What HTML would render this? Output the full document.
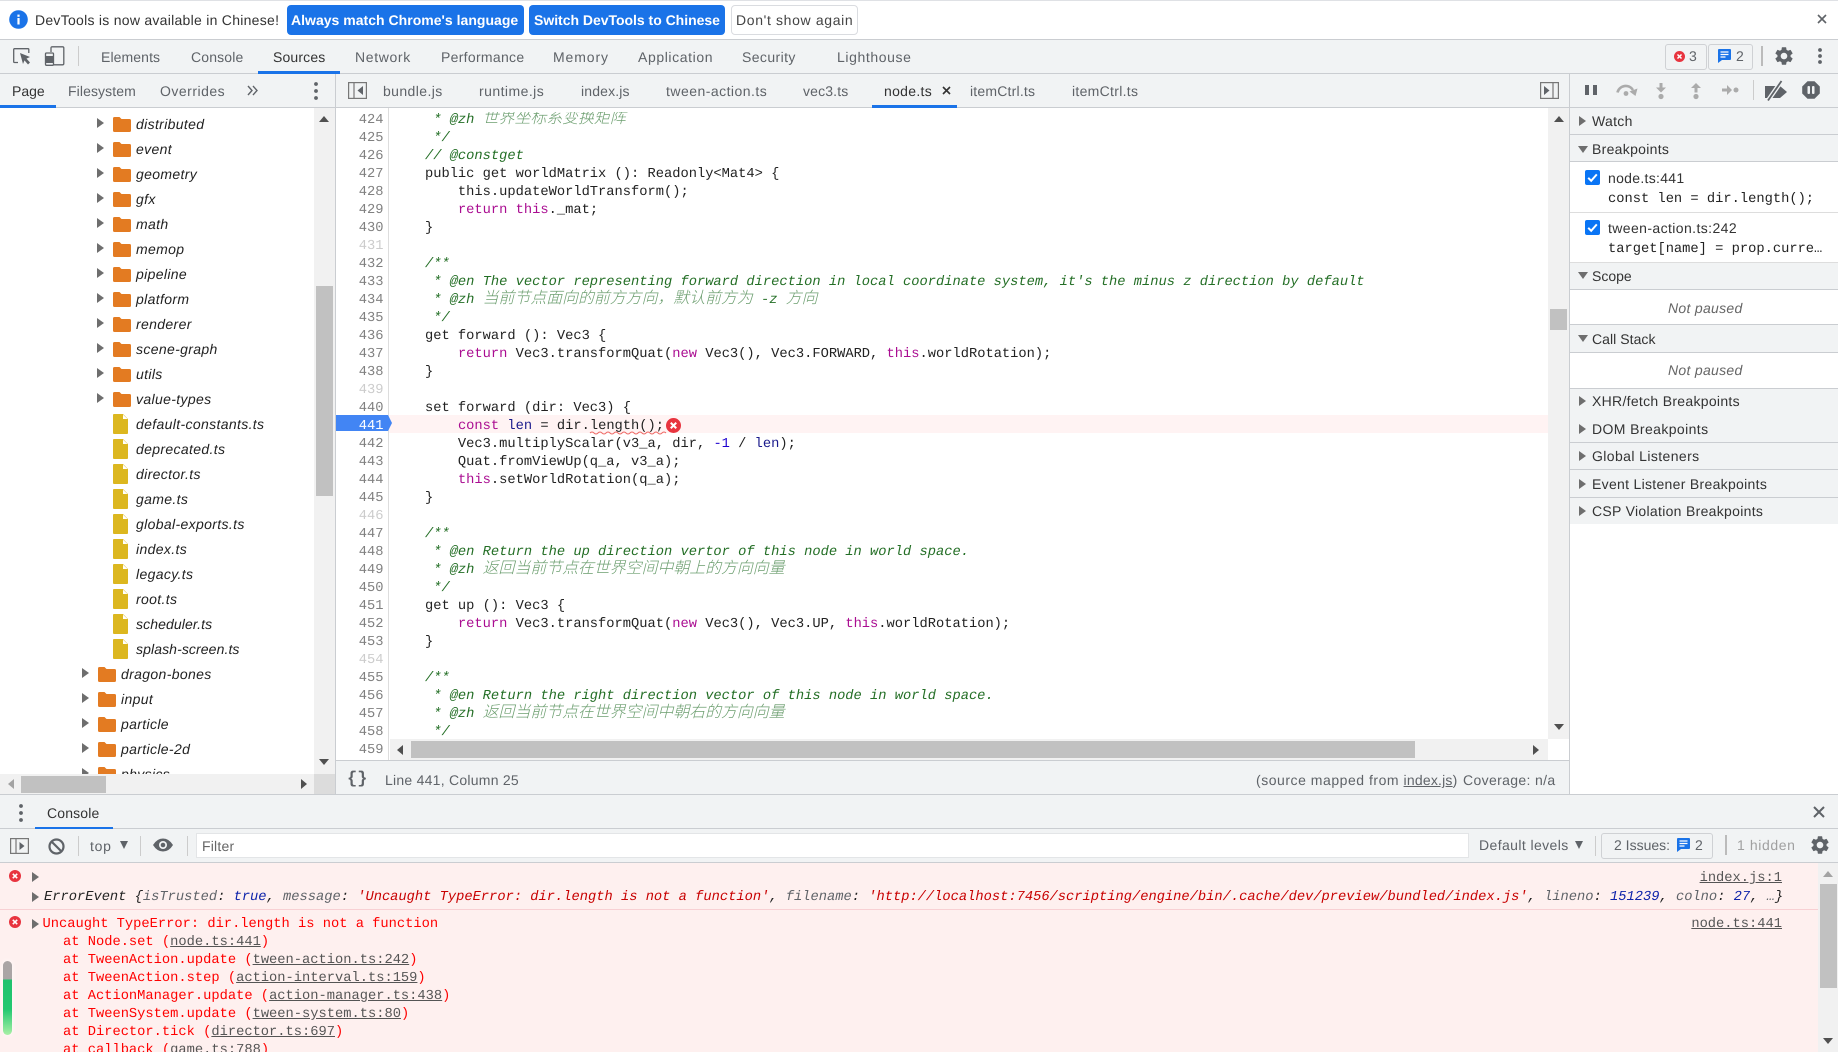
<!DOCTYPE html>
<html><head><meta charset="utf-8"><title>DevTools</title>
<style>
html,body{margin:0;padding:0;width:1839px;height:1052px;overflow:hidden;background:#fff}
body{position:relative;font:14px/18px "Liberation Sans","Noto Sans CJK SC",sans-serif;color:#333;text-rendering:geometricPrecision}
.t{position:absolute;white-space:pre;line-height:18px;letter-spacing:.3px}
.b{position:absolute}
.g{color:#5f6368}
.m{font-family:"Liberation Mono","Noto Sans CJK SC",monospace;font-size:13.74px}
.t.m{letter-spacing:0;margin-top:2px}
svg{position:absolute;overflow:visible}
.hb{background:#cacdd1;height:1px;position:absolute}
.sep{position:absolute;width:1px;background:#ccc}
.ar{position:absolute;width:0;height:0;border-left:7px solid #6e6e6e;border-top:5px solid transparent;border-bottom:5px solid transparent}
.ad{position:absolute;width:0;height:0;border-top:7px solid #6e6e6e;border-left:5px solid transparent;border-right:5px solid transparent}
.tree{position:absolute;left:0;top:112px;width:314px;height:662px;overflow:hidden}
.tree div{position:relative;height:25px;line-height:25px;font-style:italic;white-space:pre;color:#222;letter-spacing:.35px}
.tree svg{top:5px}
.tree .a{padding-left:136px}.tree .a svg{left:113px}.tree .a i{left:97px}
.tree .f{padding-left:136px}.tree .f svg{left:113px;top:2px}
.tree .c{padding-left:121px}.tree .c svg{left:98px}.tree .c i{left:82px}
.tree i{position:absolute;top:6px;width:0;height:0;border-left:7px solid #6e6e6e;border-top:5px solid transparent;border-bottom:5px solid transparent}
.ln{position:absolute;left:336px;top:112px;width:47.5px;height:648px;overflow:hidden;text-align:right;color:#808080;font-family:"Liberation Mono",monospace;font-size:13.74px}
.ln div{height:18px;line-height:18px}
.ln .e{color:#ccc}.ln .w{color:#fff}
.code{position:absolute;left:392px;top:112px;width:1156px;height:627px;overflow:hidden;color:#222;font-family:"Liberation Mono","Noto Sans CJK SC",monospace;font-size:13.74px}
.code div{height:18px;line-height:18px;white-space:pre}
.k{color:#aa0d91}.c{color:#236e25;font-style:italic}.z{font-family:"Noto Sans CJK SC",sans-serif;font-size:15.9px;line-height:0;color:#6d9f70;font-style:italic;font-weight:300}.n{color:#1c00cf}.v{color:#1a1a8c}
.sec{position:absolute;left:1570px;width:268px;background:#f1f3f4;border-bottom:1px solid #cacdd1}
.sect{position:absolute;left:1592px;white-space:pre;line-height:18px;color:#333;letter-spacing:.3px}
.lk{color:#555;text-decoration:underline}
.r{color:#f00}
.i{font-style:italic}
</style></head><body>
<svg width="0" height="0" style="position:absolute"><defs>
<symbol id="fo" viewBox="0 0 18 15"><path d="M0 1.5Q0 0 1.5 0H6.5L8.5 2H16.5Q18 2 18 3.5V13.5Q18 15 16.5 15H1.5Q0 15 0 13.5Z" fill="#e37b22"/></symbol>
<symbol id="fi" viewBox="0 0 15 20"><path d="M1 0H10L15 5V19Q15 20 14 20H1Q0 20 0 19V1Q0 0 1 0Z" fill="#dcb720"/><path d="M10 0.6L14.6 5H10Z" fill="#fff"/></symbol>
<symbol id="gear" viewBox="0 0 24 24"><path fill="#5f6368" d="M19.14 12.94c.04-.3.06-.61.06-.94 0-.32-.02-.64-.07-.94l2.03-1.58a.49.49 0 0 0 .12-.61l-1.92-3.32a.488.488 0 0 0-.59-.22l-2.39.96c-.5-.38-1.03-.7-1.62-.94l-.36-2.54a.484.484 0 0 0-.48-.41h-3.84c-.24 0-.43.17-.47.41l-.36 2.54c-.59.24-1.13.57-1.62.94l-2.39-.96c-.22-.08-.47 0-.59.22L2.74 8.87c-.12.21-.08.47.12.61l2.03 1.58c-.05.3-.09.63-.09.94s.02.64.07.94l-2.03 1.58a.49.49 0 0 0-.12.61l1.92 3.32c.12.22.37.29.59.22l2.39-.96c.5.38 1.03.7 1.62.94l.36 2.54c.05.24.24.41.48.41h3.84c.24 0 .44-.17.47-.41l.36-2.54c.59-.24 1.13-.56 1.62-.94l2.39.96c.22.08.47 0 .59-.22l1.92-3.32c.12-.22.07-.47-.12-.61l-2.01-1.58zM12 15.6c-1.98 0-3.6-1.62-3.6-3.6s1.62-3.6 3.6-3.6 3.6 1.62 3.6 3.6-1.62 3.6-3.6 3.6z"/></symbol>
<symbol id="msg" viewBox="0 0 13 14"><path d="M1 0H12Q13 0 13 1V10Q13 11 12 11H4L0 14V1Q0 0 1 0Z" fill="#1a73e8"/><path d="M2.5 3H10.5M2.5 5.5H10.5M2.5 8H7.5" stroke="#fff" stroke-width="1.3"/></symbol>
<symbol id="err" viewBox="0 0 12 12"><circle cx="6" cy="6" r="6" fill="#e8343f"/><path d="M3.8 3.8L8.2 8.2M8.2 3.8L3.8 8.2" stroke="#fff" stroke-width="1.6"/></symbol>
</defs></svg>

<!-- infobar -->
<div class="b" style="left:0;top:0;width:1839px;height:1px;background:#dfe1e5"></div>
<svg style="left:9px;top:10px" width="19" height="19" viewBox="0 0 19 19"><circle cx="9.5" cy="9.5" r="9.3" fill="#1a73e8"/><rect x="8.4" y="8" width="2.2" height="6.5" fill="#fff"/><rect x="8.4" y="4.6" width="2.2" height="2.2" fill="#fff"/></svg>
<span class="t" style="left:35px;top:11px;color:#333;letter-spacing:.27px">DevTools is now available in Chinese!</span>
<div class="b" style="left:287px;top:5px;width:237px;height:30px;background:#1a73e8;border-radius:4px"></div>
<span class="t" style="left:291px;top:11px;color:#fff;font-weight:bold;letter-spacing:.02px">Always match Chrome's language</span>
<div class="b" style="left:529px;top:5px;width:196px;height:30px;background:#1a73e8;border-radius:4px"></div>
<span class="t" style="left:534px;top:11px;color:#fff;font-weight:bold;letter-spacing:-.02px">Switch DevTools to Chinese</span>
<div class="b" style="left:731px;top:5px;width:125px;height:28px;border:1px solid #dadce0;border-radius:4px"></div>
<span class="t" style="left:736px;top:11px;color:#444;letter-spacing:.65px">Don't show again</span>
<svg style="left:1817px;top:14px" width="10" height="10"><path d="M1 1L9 9M9 1L1 9" stroke="#5f6368" stroke-width="1.6"/></svg>

<!-- main toolbar -->
<div class="b" style="left:0;top:39px;width:1839px;height:35px;background:#f1f3f4"></div>
<div class="hb" style="left:0;top:39px;width:1839px"></div>
<div class="hb" style="left:0;top:73px;width:1839px"></div>
<svg style="left:13px;top:48px" width="18" height="17" viewBox="0 0 18 17"><path d="M5 14.5H1.5Q.7 14.5.7 13.7V1.5Q.7.7 1.5.7H15Q15.8.7 15.8 1.5V5" fill="none" stroke="#5f6368" stroke-width="1.3"/><path d="M7 5L17 9L13.5 10.6L17 14.5L15 16.5L11.5 12.4L10 16Z" fill="#5f6368"/></svg>
<svg style="left:45px;top:46px" width="20" height="20" viewBox="0 0 20 20"><path d="M6 6V2Q6 .8 7.2 .8H17.5Q18.8.8 18.8 2V17.5Q18.8 18.8 17.5 18.8H8" fill="none" stroke="#5f6368" stroke-width="1.3"/><path d="M1.5 7H7.5Q8.5 7 8.5 8V18Q8.5 19.3 7.5 19.3H1.5Q.5 19.3.5 18V8Q.5 7 1.5 7Z" fill="none" stroke="#5f6368" stroke-width="1.3"/><rect x="1" y="10" width="7" height="7" fill="#5f6368"/></svg>
<div class="sep" style="left:78px;top:46px;height:20px"></div>
<span class="t g" style="left:101px;top:48px;letter-spacing:.1px">Elements</span>
<span class="t g" style="left:191px;top:48px;letter-spacing:.15px">Console</span>
<span class="t" style="left:273px;top:48px;color:#333;letter-spacing:.15px">Sources</span>
<span class="t g" style="left:355px;top:48px;letter-spacing:.65px">Network</span>
<span class="t g" style="left:441px;top:48px">Performance</span>
<span class="t g" style="left:553px;top:48px;letter-spacing:.9px">Memory</span>
<span class="t g" style="left:638px;top:48px;letter-spacing:.6px">Application</span>
<span class="t g" style="left:742px;top:48px;letter-spacing:.4px">Security</span>
<span class="t g" style="left:837px;top:48px;letter-spacing:.6px">Lighthouse</span>
<div class="b" style="left:258px;top:71px;width:82px;height:2.5px;background:#1a73e8"></div>
<div class="b" style="left:1665px;top:44px;width:40px;height:24px;border:1px solid #cfd1d4;border-radius:3px"></div>
<svg style="left:1674px;top:50.5px" width="11" height="11"><use href="#err"/></svg>
<span class="t g" style="left:1689px;top:47px">3</span>
<div class="b" style="left:1708px;top:44px;width:43px;height:24px;border:1px solid #cfd1d4;border-radius:3px"></div>
<svg style="left:1718px;top:49px" width="13" height="14"><use href="#msg"/></svg>
<span class="t g" style="left:1736px;top:47px">2</span>
<div class="sep" style="left:1761px;top:46px;height:20px;width:1.5px;background:#bbb"></div>
<svg style="left:1773px;top:45px" width="22" height="22"><use href="#gear"/></svg>
<svg style="left:1817px;top:47px" width="6" height="18"><circle cx="3" cy="3" r="1.9" fill="#5f6368"/><circle cx="3" cy="9" r="1.9" fill="#5f6368"/><circle cx="3" cy="15" r="1.9" fill="#5f6368"/></svg>

<!-- second row -->
<div class="b" style="left:0;top:74px;width:1570px;height:33px;background:#f1f3f4"></div>
<div class="b" style="left:1570px;top:74px;width:268px;height:33px;background:#f1f3f4"></div>
<div class="hb" style="left:0;top:107px;width:1838px"></div>
<span class="t" style="left:12px;top:82px;color:#333;letter-spacing:0">Page</span>
<div class="b" style="left:0;top:105px;width:56px;height:2.5px;background:#1a73e8"></div>
<span class="t g" style="left:68px;top:82px;letter-spacing:.1px">Filesystem</span>
<span class="t g" style="left:160px;top:82px;letter-spacing:.5px">Overrides</span>
<svg style="left:247px;top:85px" width="12" height="11"><path d="M1 1L5 5.5L1 10M6 1L10 5.5L6 10" fill="none" stroke="#5f6368" stroke-width="1.4"/></svg>
<svg style="left:313px;top:81px" width="6" height="20"><circle cx="3" cy="3" r="1.9" fill="#5f6368"/><circle cx="3" cy="10" r="1.9" fill="#5f6368"/><circle cx="3" cy="17" r="1.9" fill="#5f6368"/></svg>
<div class="b" style="left:335px;top:74px;width:1px;height:720px;background:#cacdd1"></div>
<svg style="left:348px;top:82px" width="19" height="17" viewBox="0 0 19 17"><rect x=".6" y=".6" width="17.8" height="15.8" fill="none" stroke="#777" stroke-width="1.2"/><path d="M6 .6V16.4" stroke="#777" stroke-width="1.2"/><path d="M15 4V13L9.5 8.5Z" fill="#5f6368"/></svg>
<span class="t g" style="left:383px;top:82px;letter-spacing:.4px">bundle.js</span>
<span class="t g" style="left:479px;top:82px;letter-spacing:.45px">runtime.js</span>
<span class="t g" style="left:581px;top:82px;letter-spacing:.15px">index.js</span>
<span class="t g" style="left:666px;top:82px;letter-spacing:.47px">tween-action.ts</span>
<span class="t g" style="left:803px;top:82px;letter-spacing:.15px">vec3.ts</span>
<span class="t" style="left:884px;top:82px;color:#333">node.ts</span>
<svg style="left:942px;top:86px" width="9" height="9"><path d="M1 1L8 8M8 1L1 8" stroke="#333" stroke-width="1.6"/></svg>
<div class="b" style="left:872px;top:105px;width:85px;height:2.5px;background:#1a73e8"></div>
<span class="t g" style="left:970px;top:82px;letter-spacing:.2px">itemCtrl.ts</span>
<span class="t g" style="left:1072px;top:82px">itemCtrl.ts</span>
<svg style="left:1540px;top:82px" width="19" height="17" viewBox="0 0 19 17"><rect x=".6" y=".6" width="17.8" height="15.8" fill="none" stroke="#777" stroke-width="1.2"/><path d="M13 .6V16.4" stroke="#777" stroke-width="1.2"/><path d="M4 4V13L9.5 8.5Z" fill="#5f6368"/></svg>

<!-- debugger toolbar icons -->
<div class="b" style="left:1569px;top:74px;width:1px;height:720px;background:#cacdd1"></div>
<svg style="left:1585px;top:85px" width="12" height="10"><rect x="0" y="0" width="4" height="10" fill="#5f6368"/><rect x="8" y="0" width="4" height="10" fill="#5f6368"/></svg>
<svg style="left:1615px;top:82px" width="24" height="16" viewBox="0 0 24 16"><path d="M2.5 10.5A8.5 8.5 0 0 1 18 8" fill="none" stroke="#ababab" stroke-width="2.6"/><path d="M14.5 9.5L22.5 6.5L20.5 14Z" fill="#ababab"/><circle cx="11" cy="11.5" r="2.4" fill="#ababab"/></svg>
<svg style="left:1655px;top:82px" width="12" height="18" viewBox="0 0 12 18"><path d="M4.5 1H7.5V5.5H11L6 10.5L1 5.5H4.5Z" fill="#ababab"/><circle cx="6" cy="14.5" r="2.6" fill="#ababab"/></svg>
<svg style="left:1690px;top:82px" width="12" height="18" viewBox="0 0 12 18"><path d="M4.5 10.5H7.5V6H11L6 1L1 6H4.5Z" fill="#ababab"/><circle cx="6" cy="14.5" r="2.6" fill="#ababab"/></svg>
<svg style="left:1721px;top:84px" width="18" height="12" viewBox="0 0 18 12"><path d="M1 4.5H6V1L11 6L6 11V7.5H1Z" fill="#ababab"/><circle cx="15" cy="6" r="2.5" fill="#ababab"/></svg>
<div class="sep" style="left:1753px;top:80px;height:20px"></div>
<svg style="left:1764px;top:80px" width="24" height="21" viewBox="0 0 24 21"><path d="M1 6H16L23 12L16 18H1Z" fill="#5f6368"/><path d="M4 20.5L17.5 1" stroke="#f1f3f4" stroke-width="4.5"/><path d="M4 20.5L17.5 1" stroke="#5f6368" stroke-width="1.8"/></svg>
<svg style="left:1802px;top:81px" width="18" height="18" viewBox="0 0 18 18"><path d="M5.5.2H12.5L17.8 5.5V12.5L12.5 17.8H5.5L.2 12.5V5.5Z" fill="#5f6368"/><rect x="5.5" y="5" width="2.5" height="8" rx="1" fill="#f1f3f4"/><rect x="10" y="5" width="2.5" height="8" rx="1" fill="#f1f3f4"/></svg>

<!-- tree -->
<div class="tree">
<div class="a"><i></i><svg width="18" height="15"><use href="#fo"/></svg>distributed</div>
<div class="a"><i></i><svg width="18" height="15"><use href="#fo"/></svg>event</div>
<div class="a"><i></i><svg width="18" height="15"><use href="#fo"/></svg>geometry</div>
<div class="a"><i></i><svg width="18" height="15"><use href="#fo"/></svg>gfx</div>
<div class="a"><i></i><svg width="18" height="15"><use href="#fo"/></svg>math</div>
<div class="a"><i></i><svg width="18" height="15"><use href="#fo"/></svg>memop</div>
<div class="a"><i></i><svg width="18" height="15"><use href="#fo"/></svg>pipeline</div>
<div class="a"><i></i><svg width="18" height="15"><use href="#fo"/></svg>platform</div>
<div class="a"><i></i><svg width="18" height="15"><use href="#fo"/></svg>renderer</div>
<div class="a"><i></i><svg width="18" height="15"><use href="#fo"/></svg>scene-graph</div>
<div class="a"><i></i><svg width="18" height="15"><use href="#fo"/></svg>utils</div>
<div class="a"><i></i><svg width="18" height="15"><use href="#fo"/></svg>value-types</div>
<div class="f"><svg width="15" height="20"><use href="#fi"/></svg>default-constants.ts</div>
<div class="f"><svg width="15" height="20"><use href="#fi"/></svg>deprecated.ts</div>
<div class="f"><svg width="15" height="20"><use href="#fi"/></svg>director.ts</div>
<div class="f"><svg width="15" height="20"><use href="#fi"/></svg>game.ts</div>
<div class="f"><svg width="15" height="20"><use href="#fi"/></svg>global-exports.ts</div>
<div class="f"><svg width="15" height="20"><use href="#fi"/></svg>index.ts</div>
<div class="f"><svg width="15" height="20"><use href="#fi"/></svg>legacy.ts</div>
<div class="f"><svg width="15" height="20"><use href="#fi"/></svg>root.ts</div>
<div class="f" style="letter-spacing:.1px"><svg width="15" height="20"><use href="#fi"/></svg>scheduler.ts</div>
<div class="f" style="letter-spacing:.1px"><svg width="15" height="20"><use href="#fi"/></svg>splash-screen.ts</div>
<div class="c"><i></i><svg width="18" height="15"><use href="#fo"/></svg>dragon-bones</div>
<div class="c"><i></i><svg width="18" height="15"><use href="#fo"/></svg>input</div>
<div class="c"><i></i><svg width="18" height="15"><use href="#fo"/></svg>particle</div>
<div class="c"><i></i><svg width="18" height="15"><use href="#fo"/></svg>particle-2d</div>
<div class="c"><i></i><svg width="18" height="15"><use href="#fo"/></svg>physics</div>
</div>
<!-- tree scrollbars -->
<div class="b" style="left:314px;top:108px;width:21px;height:666px;background:#f1f1f1"></div>
<div class="b" style="left:316px;top:286px;width:17px;height:210px;background:#c1c1c1"></div>
<svg style="left:319px;top:116px" width="10" height="6"><path d="M5 0L10 6H0Z" fill="#505050"/></svg>
<svg style="left:319px;top:759px" width="10" height="6"><path d="M0 0H10L5 6Z" fill="#505050"/></svg>
<div class="b" style="left:0;top:774px;width:314px;height:20px;background:#f1f1f1"></div>
<div class="b" style="left:314px;top:774px;width:21px;height:20px;background:#dcdcdc"></div>
<div class="b" style="left:21px;top:776px;width:85px;height:17px;background:#c1c1c1"></div>
<svg style="left:8px;top:779px" width="6" height="10"><path d="M6 0V10L0 5Z" fill="#a3a3a3"/></svg>
<svg style="left:301px;top:779px" width="6" height="10"><path d="M0 0V10L6 5Z" fill="#505050"/></svg>

<!-- editor -->
<div class="b" style="left:388px;top:108px;width:1px;height:652px;background:#ddd"></div>
<div class="b" style="left:389px;top:415px;width:1159px;height:18px;background:#fff3f3"></div>
<svg style="left:336px;top:415px" width="57" height="16"><path d="M0 0H52L56 8L52 16H0Z" fill="#4285f4"/></svg>
<div class="ln">
<div>424</div><div>425</div><div>426</div><div>427</div><div>428</div><div>429</div><div>430</div><div class="e">431</div><div>432</div><div>433</div><div>434</div><div>435</div><div>436</div><div>437</div><div>438</div><div class="e">439</div><div>440</div><div class="w">441</div><div>442</div><div>443</div><div>444</div><div>445</div><div class="e">446</div><div>447</div><div>448</div><div>449</div><div>450</div><div>451</div><div>452</div><div>453</div><div class="e">454</div><div>455</div><div>456</div><div>457</div><div>458</div><div>459</div>
</div>
<div class="code">
<div><span class="c">     * @zh </span><span class="z">世界坐标系变换矩阵</span></div>
<div><span class="c">     */</span></div>
<div><span class="c">    // @constget</span></div>
<div>    public get worldMatrix (): Readonly&lt;Mat4&gt; {</div>
<div>        this.updateWorldTransform();</div>
<div>        <span class="k">return this</span>._mat;</div>
<div>    }</div>
<div></div>
<div><span class="c">    /**</span></div>
<div><span class="c">     * @en The vector representing forward direction in local coordinate system, it's the minus z direction by default</span></div>
<div><span class="c">     * @zh </span><span class="z">当前节点面向的前方方向，默认前方为</span><span class="c"> -z </span><span class="z">方向</span></div>
<div><span class="c">     */</span></div>
<div>    get forward (): Vec3 {</div>
<div>        <span class="k">return</span> Vec3.transformQuat(<span class="k">new</span> Vec3(), Vec3.FORWARD, <span class="k">this</span>.worldRotation);</div>
<div>    }</div>
<div></div>
<div>    set forward (dir: Vec3) {</div>
<div>        <span class="k">const</span> <span class="v">len</span> = dir.length();</div>
<div>        Vec3.multiplyScalar(v3_a, dir, <span class="n">-1</span> / <span class="v">len</span>);</div>
<div>        Quat.fromViewUp(q_a, v3_a);</div>
<div>        <span class="k">this</span>.setWorldRotation(q_a);</div>
<div>    }</div>
<div></div>
<div><span class="c">    /**</span></div>
<div><span class="c">     * @en Return the up direction vertor of this node in world space.</span></div>
<div><span class="c">     * @zh </span><span class="z">返回当前节点在世界空间中朝上的方向向量</span></div>
<div><span class="c">     */</span></div>
<div>    get up (): Vec3 {</div>
<div>        <span class="k">return</span> Vec3.transformQuat(<span class="k">new</span> Vec3(), Vec3.UP, <span class="k">this</span>.worldRotation);</div>
<div>    }</div>
<div></div>
<div><span class="c">    /**</span></div>
<div><span class="c">     * @en Return the right direction vector of this node in world space.</span></div>
<div><span class="c">     * @zh </span><span class="z">返回当前节点在世界空间中朝右的方向向量</span></div>
<div><span class="c">     */</span></div>
</div>
<svg style="left:590px;top:431px" width="76" height="4" viewBox="0 0 76 4"><path d="M0 2Q2 0 4 2T8 2T12 2T16 2T20 2T24 2T28 2T32 2T36 2T40 2T44 2T48 2T52 2T56 2T60 2T64 2T68 2T72 2T76 2" fill="none" stroke="#ef6a66" stroke-width="1"/></svg>
<svg style="left:665.5px;top:417.5px" width="15" height="15"><use href="#err"/></svg>
<!-- editor scrollbars -->
<div class="b" style="left:1548px;top:108px;width:21px;height:631px;background:#f1f1f1"></div>
<div class="b" style="left:1550px;top:309px;width:17px;height:21px;background:#c1c1c1"></div>
<svg style="left:1554px;top:116px" width="10" height="6"><path d="M5 0L10 6H0Z" fill="#505050"/></svg>
<svg style="left:1554px;top:724px" width="10" height="6"><path d="M0 0H10L5 6Z" fill="#505050"/></svg>
<div class="b" style="left:390px;top:739px;width:1158px;height:21px;background:#f1f1f1"></div>
<div class="b" style="left:411px;top:741px;width:1004px;height:17px;background:#c1c1c1"></div>
<svg style="left:397px;top:745px" width="6" height="10"><path d="M6 0V10L0 5Z" fill="#505050"/></svg>
<svg style="left:1533px;top:745px" width="6" height="10"><path d="M0 0V10L6 5Z" fill="#505050"/></svg>
<!-- status -->
<div class="b" style="left:336px;top:761px;width:1233px;height:33px;background:#f1f3f4"></div>
<div class="hb" style="left:336px;top:760px;width:1233px"></div>
<span class="t" style="left:347px;top:771px;letter-spacing:0;font-family:'Liberation Mono',monospace;font-weight:bold;font-size:17px;color:#5f6368">{}</span>
<span class="t g" style="left:385px;top:771px;letter-spacing:.25px">Line 441, Column 25</span>
<span class="t g" style="left:1256px;top:771px;letter-spacing:.53px">(source mapped from <span style="text-decoration:underline;letter-spacing:.2px">index.js</span>)</span>
<span class="t g" style="left:1463px;top:771px;letter-spacing:.35px">Coverage: n/a</span>

<!-- drawer -->
<div class="hb" style="left:0;top:794px;width:1838px"></div>
<div class="b" style="left:0;top:795px;width:1838px;height:67px;background:#f1f3f4"></div>
<div class="hb" style="left:0;top:828px;width:1838px"></div>
<div class="hb" style="left:0;top:862px;width:1838px"></div>
<svg style="left:18px;top:803px" width="6" height="20"><circle cx="3" cy="3" r="1.9" fill="#5f6368"/><circle cx="3" cy="10" r="1.9" fill="#5f6368"/><circle cx="3" cy="17" r="1.9" fill="#5f6368"/></svg>
<span class="t" style="left:47px;top:804px;color:#333;letter-spacing:.15px">Console</span>
<div class="b" style="left:35px;top:827px;width:78px;height:2px;background:#1a73e8"></div>
<svg style="left:1813px;top:806px" width="12" height="12"><path d="M1 1L11 11M11 1L1 11" stroke="#5f6368" stroke-width="2"/></svg>
<svg style="left:10px;top:838px" width="19" height="16" viewBox="0 0 19 16"><rect x=".6" y=".6" width="17.8" height="14.8" fill="none" stroke="#777" stroke-width="1.2"/><path d="M6 .6V15.4" stroke="#777" stroke-width="1.2"/><path d="M9.5 4V12L14.5 8Z" fill="#5f6368"/></svg>
<svg style="left:47.5px;top:837.5px" width="17" height="17" viewBox="0 0 17 17"><circle cx="8.5" cy="8.5" r="7" fill="none" stroke="#5f6368" stroke-width="2.2"/><path d="M3.6 3.6L13.4 13.4" stroke="#5f6368" stroke-width="2.2"/></svg>
<div class="sep" style="left:78px;top:836px;height:20px"></div>
<span class="t g" style="left:90px;top:837px;letter-spacing:.7px">top</span>
<svg style="left:120px;top:841px" width="8" height="8"><path d="M0 0H8L4 8Z" fill="#5f6368"/></svg>
<div class="sep" style="left:140px;top:836px;height:20px"></div>
<svg style="left:153px;top:838px" width="20" height="14" viewBox="0 0 20 14"><path d="M0 7Q4 .5 10 .5T20 7Q16 13.5 10 13.5T0 7Z" fill="#5f6368"/><circle cx="10" cy="7" r="4" fill="#f1f3f4"/><circle cx="10" cy="7" r="2.3" fill="#5f6368"/></svg>
<div class="sep" style="left:187px;top:836px;height:20px"></div>
<div class="b" style="left:196px;top:833px;width:1271px;height:23px;background:#fff;border:1px solid #e3e5e7"></div>
<span class="t" style="left:202px;top:837px;color:#666;letter-spacing:.2px">Filter</span>
<span class="t g" style="left:1479px;top:836px;letter-spacing:.4px">Default levels</span>
<svg style="left:1575px;top:841px" width="8" height="8"><path d="M0 0H8L4 8Z" fill="#5f6368"/></svg>
<div class="sep" style="left:1595px;top:836px;height:20px"></div>
<div class="b" style="left:1601px;top:833px;width:110px;height:24px;border:1px solid #cfd1d4;border-radius:3px"></div>
<span class="t g" style="left:1614px;top:836px;letter-spacing:0">2 Issues:</span>
<svg style="left:1677px;top:838px" width="13" height="14"><use href="#msg"/></svg>
<span class="t g" style="left:1695px;top:836px">2</span>
<div class="sep" style="left:1725px;top:835px;height:20px;width:1.5px;background:#bbb"></div>
<span class="t" style="left:1737px;top:836px;color:#a0a0a0;letter-spacing:.6px">1 hidden</span>
<svg style="left:1808.5px;top:834px" width="22" height="22"><use href="#gear"/></svg>

<!-- console -->
<div class="b" style="left:0;top:863px;width:1818px;height:189px;background:#fef0ef"></div>
<div class="b" style="left:0;top:909px;width:1818px;height:1px;background:#f8d0d3"></div>
<div class="b" style="left:1818px;top:863px;width:20px;height:189px;background:#f1f1f1"></div>
<div class="b" style="left:1820px;top:884px;width:17px;height:104px;background:#c1c1c1"></div>
<svg style="left:1823px;top:871px" width="10" height="6"><path d="M5 0L10 6H0Z" fill="#a3a3a3"/></svg>
<svg style="left:1823px;top:1038px" width="10" height="6"><path d="M0 0H10L5 6Z" fill="#505050"/></svg>
<svg style="left:9px;top:870px" width="12" height="12"><use href="#err"/></svg>
<div class="ar" style="left:32px;top:872px"></div>
<div class="ar" style="left:32px;top:892px"></div>
<span class="t m i" style="left:44px;top:887px;color:#222">ErrorEvent {<span class="g">isTrusted</span>: <span style="color:#0d22aa">true</span>, <span class="g">message</span>: <span style="color:#c80000">'Uncaught TypeError: dir.length is not a function'</span>, <span class="g">filename</span>: <span style="color:#c80000">'http://localhost:7456/scripting/engine/bin/.cache/dev/preview/bundled/index.js'</span>, <span class="g">lineno</span>: <span style="color:#0d22aa">151239</span>, <span class="g">colno</span>: <span style="color:#0d22aa">27</span>, <span class="g">…</span>}</span>
<span class="t m lk" style="right:57px;top:868px">index.js:1</span>
<svg style="left:9px;top:916px" width="12" height="12"><use href="#err"/></svg>
<div class="ar" style="left:32px;top:919px"></div>
<span class="t m r" style="left:42.5px;top:914px">Uncaught TypeError: dir.length is not a function</span>
<span class="t m lk" style="right:57px;top:914px">node.ts:441</span>
<span class="t m r" style="left:63px;top:932px">at Node.set (<span class="lk">node.ts:441</span>)</span>
<span class="t m r" style="left:63px;top:950px">at TweenAction.update (<span class="lk">tween-action.ts:242</span>)</span>
<span class="t m r" style="left:63px;top:968px">at TweenAction.step (<span class="lk">action-interval.ts:159</span>)</span>
<span class="t m r" style="left:63px;top:986px">at ActionManager.update (<span class="lk">action-manager.ts:438</span>)</span>
<span class="t m r" style="left:63px;top:1004px">at TweenSystem.update (<span class="lk">tween-system.ts:80</span>)</span>
<span class="t m r" style="left:63px;top:1022px">at Director.tick (<span class="lk">director.ts:697</span>)</span>
<span class="t m r" style="left:63px;top:1040px">at callback (<span class="lk">game.ts:788</span>)</span>
<div class="b" style="left:3px;top:961px;width:9px;height:74px;border-radius:5px;background:linear-gradient(#aaa5a5 0,#aaa5a5 24%,#1fc26d 26%,#22c870 65%,#a9f0a6 100%);box-shadow:0 0 6px rgba(255,255,255,.8)"></div>

<!-- debugger sidebar -->
<div class="sec" style="top:108px;height:26px"></div>
<div class="ar" style="left:1579px;top:116px"></div><span class="sect" style="top:112px">Watch</span>
<div class="sec" style="top:135px;height:26px"></div>
<div class="ad" style="left:1578px;top:146px"></div><span class="sect" style="top:140px">Breakpoints</span>
<div class="b" style="left:1585px;top:170px;width:15px;height:15px;background:#0a75f5;border-radius:2px"></div>
<svg style="left:1585px;top:170px" width="15" height="15"><path d="M3.2 7.8L6.2 10.8L11.8 4.4" fill="none" stroke="#fff" stroke-width="2"/></svg>
<span class="t" style="left:1608px;top:169px;color:#333">node.ts:441</span>
<span class="t m" style="left:1608px;top:189px;color:#222">const len = dir.length();</span>
<div class="hb" style="left:1570px;top:212px;width:268px;background:#ddd"></div>
<div class="b" style="left:1585px;top:220px;width:15px;height:15px;background:#0a75f5;border-radius:2px"></div>
<svg style="left:1585px;top:220px" width="15" height="15"><path d="M3.2 7.8L6.2 10.8L11.8 4.4" fill="none" stroke="#fff" stroke-width="2"/></svg>
<span class="t" style="left:1608px;top:219px;color:#333;letter-spacing:.4px">tween-action.ts:242</span>
<span class="t m" style="left:1608px;top:239px;color:#222">target[name] = prop.curre…</span>
<div class="sec" style="top:262px;height:26px;border-top:1px solid #ddd"></div>
<div class="ad" style="left:1578px;top:272px"></div><span class="sect" style="top:267px;letter-spacing:0">Scope</span>
<span class="t i" style="left:1668px;top:299px;color:#666">Not paused</span>
<div class="sec" style="top:324px;height:27px;border-top:1px solid #cacdd1"></div>
<div class="ad" style="left:1578px;top:335px"></div><span class="sect" style="top:330px;letter-spacing:.05px">Call Stack</span>
<span class="t i" style="left:1668px;top:361px;color:#666">Not paused</span>
<div class="sec" style="top:388px;height:26px;border-top:1px solid #cacdd1"></div>
<div class="ar" style="left:1579px;top:396px"></div><span class="sect" style="top:392px">XHR/fetch Breakpoints</span>
<div class="sec" style="top:415px;height:27px"></div>
<div class="ar" style="left:1579px;top:424px"></div><span class="sect" style="top:420px;letter-spacing:.4px">DOM Breakpoints</span>
<div class="sec" style="top:443px;height:26px"></div>
<div class="ar" style="left:1579px;top:451px"></div><span class="sect" style="top:447px;letter-spacing:.4px">Global Listeners</span>
<div class="sec" style="top:470px;height:27px"></div>
<div class="ar" style="left:1579px;top:479px"></div><span class="sect" style="top:475px">Event Listener Breakpoints</span>
<div class="sec" style="top:498px;height:26px;border-bottom:0"></div>
<div class="ar" style="left:1579px;top:506px"></div><span class="sect" style="top:502px">CSP Violation Breakpoints</span>
<div class="b" style="left:1838px;top:0;width:1px;height:1052px;background:#fff"></div>
</body></html>
